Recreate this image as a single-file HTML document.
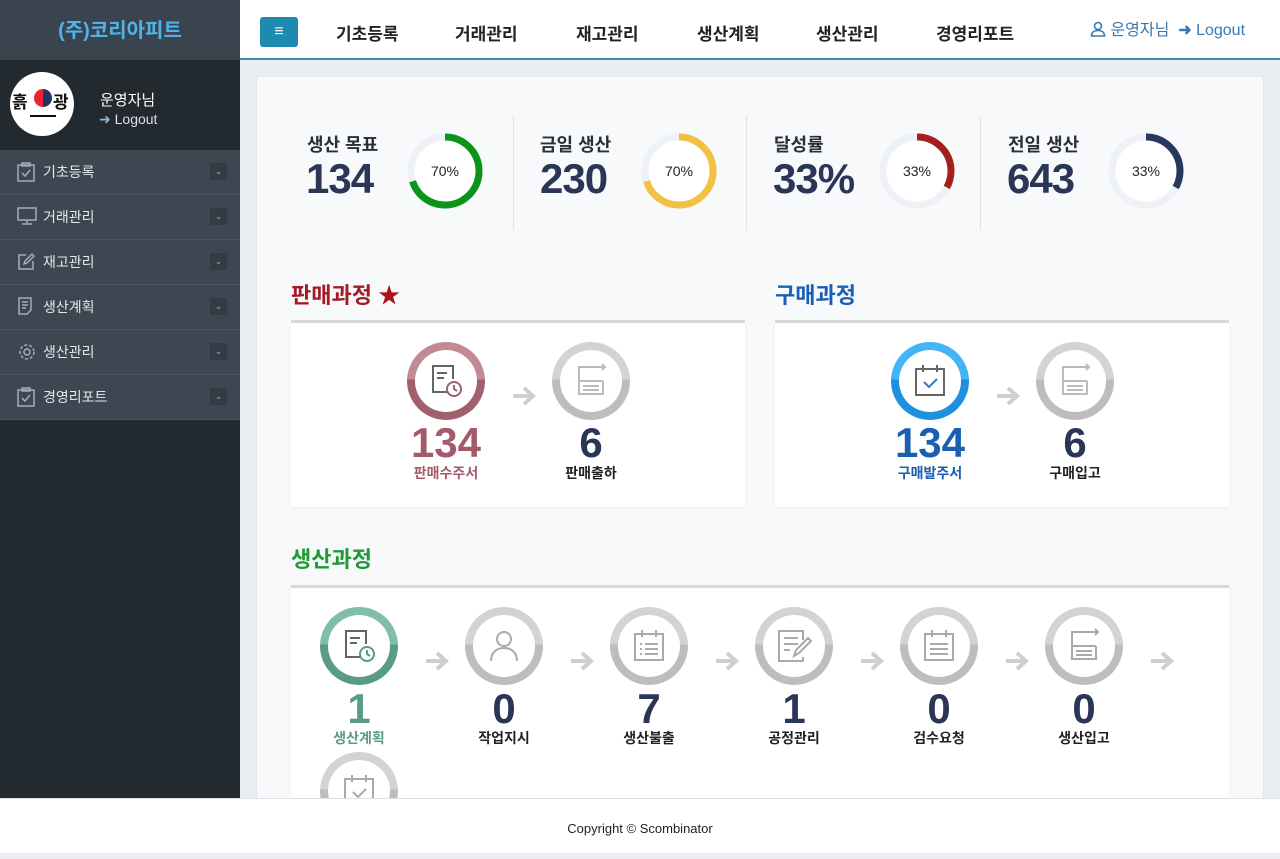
<!DOCTYPE html>
<html><head><meta charset="utf-8">
<style>
*{box-sizing:border-box;margin:0;padding:0}
body{width:1280px;height:853px;overflow:hidden;position:relative;background:#eaedf1;font-family:"Liberation Sans","Noto Sans CJK KR",sans-serif;color:#222}
.abs{position:absolute}
#side{left:0;top:0;width:240px;height:798px;background:#22292f}
#logo{left:0;top:0;width:240px;height:60px;background:#3a444e;color:#4fb3e8;font-size:20px;font-weight:bold;text-align:center;line-height:62px}
#menu{left:0;top:150px;width:240px}
.mi{height:45px;background:#3d4751;border-bottom:1px solid #4b555f;position:relative;color:#e4e7ea;font-size:14px;line-height:44px;padding-left:43px}
.mi svg{position:absolute;left:17px;top:12px}
.mi .ch{position:absolute;left:210px;top:13px;width:17px;height:17px;background:#333c45;color:#aab;font-size:9px;line-height:17px;text-align:center}
#top{left:240px;top:0;width:1040px;height:60px;background:#fff;border-bottom:2px solid #3a90ab}
.nav{top:20px;font-size:17px;font-weight:bold;color:#222}
#panel{left:256px;top:76px;width:1008px;height:760px;background:#f7f9fb;border:1px solid #e3e6ea}
.kl{font-size:18px;font-weight:bold;color:#2a2f3a;top:131px}
.kn{font-size:42px;font-weight:bold;color:#2a3656;top:155px;letter-spacing:-1px}
.dv{top:116px;width:1px;height:114px;background:#dfe2e6}
.card{background:#fff;border-top:3px solid #d5d8de;box-shadow:0 1px 2px rgba(0,0,0,.05)}
.tt{font-size:22px;font-weight:bold}
.ring{width:78px;height:78px;border-radius:50%}
.ring .in{position:absolute;left:8px;top:8px;width:62px;height:62px;border-radius:50%;background:#fff}
.ring svg{position:absolute;left:19px;top:19px}
.num{width:120px;text-align:center;font-size:42px;font-weight:bold;color:#2a3656;line-height:42px}
.lb{width:120px;text-align:center;font-size:14px;font-weight:bold;color:#222}
.arr{width:26px;height:22px}
#foot{left:0;top:798px;width:1280px;height:55px;background:#fff;border-top:1px solid #dde0e3;text-align:center;font-size:13px;line-height:60px;color:#222}
</style></head><body>
<svg width="0" height="0" style="position:absolute"><defs><symbol id="ar" viewBox="0 0 26 22"><path d="M2 11h20M13 3l9 8-9 8" fill="none" stroke="#cfcfcf" stroke-width="4"/></symbol></defs></svg>
<div id="side" class="abs"></div>
<div id="logo" class="abs">(주)코리아피트</div>
<div class="abs" style="left:10px;top:72px;width:64px;height:64px;border-radius:50%;background:#fff"></div>
<div class="abs" style="left:12px;top:88px;font-size:17px;font-weight:bold;color:#111">흙</div>
<div class="abs" style="left:53px;top:88px;font-size:17px;font-weight:bold;color:#111">광</div>
<div class="abs" style="left:34px;top:89px;width:18px;height:18px;border-radius:50%;background:linear-gradient(90deg,#e23 50%,#236 50%)"></div>
<div class="abs" style="left:30px;top:115px;width:26px;height:2px;background:#111"></div>
<div class="abs" style="left:100px;top:89px;color:#fff;font-size:15px">운영자님</div>
<div class="abs" style="left:99px;top:111px;color:#dde;font-size:14px"><span style="color:#8fb8d8">&#10140;</span> Logout</div>
<div id="menu" class="abs">
<div class="mi"><svg width="18" height="20" viewBox="0 0 18 20" fill="none" stroke="#aab" stroke-width="1.5"><rect x="1" y="3" width="16" height="16"/><rect x="5" y="1" width="8" height="3"/><path d="M5 11l3 3 5-6"/></svg>기초등록<span class="ch">&#8964;</span></div>
<div class="mi"><svg width="20" height="18" viewBox="0 0 20 18" fill="none" stroke="#aab" stroke-width="1.5"><rect x="1" y="1" width="18" height="12"/><path d="M10 13v3M5 17h10"/></svg>거래관리<span class="ch">&#8964;</span></div>
<div class="mi"><svg width="18" height="18" viewBox="0 0 18 18" fill="none" stroke="#aab" stroke-width="1.5"><path d="M9 3H2v14h14V9"/><path d="M7 12l1-3 7-7 2 2-7 7z"/></svg>재고관리<span class="ch">&#8964;</span></div>
<div class="mi"><svg width="16" height="18" viewBox="0 0 16 18" fill="none" stroke="#aab" stroke-width="1.5"><path d="M2 1h12v12l-4 4H2z"/><path d="M5 5h6M5 8h6M5 11h4"/></svg>생산계획<span class="ch">&#8964;</span></div>
<div class="mi"><svg width="20" height="20" viewBox="0 0 20 20" fill="none" stroke="#aab" stroke-width="1.5"><circle cx="10" cy="10" r="3"/><circle cx="10" cy="10" r="7" stroke-dasharray="3 2"/></svg>생산관리<span class="ch">&#8964;</span></div>
<div class="mi"><svg width="18" height="20" viewBox="0 0 18 20" fill="none" stroke="#aab" stroke-width="1.5"><rect x="1" y="3" width="16" height="16"/><rect x="5" y="1" width="8" height="3"/><path d="M5 11l3 3 5-6"/></svg>경영리포트<span class="ch">&#8964;</span></div>
</div>

<div id="top" class="abs"></div>
<div class="abs" style="left:260px;top:17px;width:38px;height:30px;background:#1f8ab0;border-radius:3px;color:#fff;text-align:center;line-height:30px;font-size:16px">&#8801;</div>
<div class="abs nav" style="left:336px">기초등록</div>
<div class="abs nav" style="left:455px">거래관리</div>
<div class="abs nav" style="left:576px">재고관리</div>
<div class="abs nav" style="left:697px">생산계획</div>
<div class="abs nav" style="left:816px">생산관리</div>
<div class="abs nav" style="left:936px">경영리포트</div>
<div class="abs" style="left:1090px;top:16px;color:#3a78b0;font-size:16px"><svg width="16" height="16" viewBox="0 0 16 16" fill="none" stroke="#3a78b0" stroke-width="1.6" style="vertical-align:-2px"><circle cx="8" cy="5" r="3.5"/><path d="M1.5 15c0-4 3-5.5 6.5-5.5s6.5 1.5 6.5 5.5z"/></svg> 운영자님 &nbsp;<b>&#10140;</b> Logout</div>

<div id="panel" class="abs"></div>
<div class="abs kl" style="left:307px">생산 목표</div><div class="abs kn" style="left:306px">134</div>
<div class="abs kl" style="left:540px">금일 생산</div><div class="abs kn" style="left:540px">230</div>
<div class="abs kl" style="left:774px">달성률</div><div class="abs kn" style="left:773px">33%</div>
<div class="abs kl" style="left:1008px">전일 생산</div><div class="abs kn" style="left:1007px">643</div>
<div class="abs dv" style="left:513px"></div><div class="abs dv" style="left:746px"></div><div class="abs dv" style="left:980px"></div>
<svg class="abs" style="left:407px;top:133px" width="76" height="76" viewBox="0 0 76 76"><circle cx="38" cy="38" r="34" fill="#fff" stroke="#eef1f5" stroke-width="7"/><circle cx="38" cy="38" r="34" fill="none" stroke="#0a9418" stroke-width="7" stroke-dasharray="149.5 214" transform="rotate(-90 38 38)"/><text x="38" y="43" text-anchor="middle" font-size="14" fill="#222" font-family="Liberation Sans">70%</text></svg>
<svg class="abs" style="left:641px;top:133px" width="76" height="76" viewBox="0 0 76 76"><circle cx="38" cy="38" r="34" fill="#fff" stroke="#eef1f5" stroke-width="7"/><circle cx="38" cy="38" r="34" fill="none" stroke="#f2c043" stroke-width="7" stroke-dasharray="149.5 214" transform="rotate(-90 38 38)"/><text x="38" y="43" text-anchor="middle" font-size="14" fill="#222" font-family="Liberation Sans">70%</text></svg>
<svg class="abs" style="left:879px;top:133px" width="76" height="76" viewBox="0 0 76 76"><circle cx="38" cy="38" r="34" fill="#fff" stroke="#eef1f5" stroke-width="7"/><circle cx="38" cy="38" r="34" fill="none" stroke="#a3201c" stroke-width="7" stroke-dasharray="70.5 214" transform="rotate(-90 38 38)"/><text x="38" y="43" text-anchor="middle" font-size="14" fill="#222" font-family="Liberation Sans">33%</text></svg>
<svg class="abs" style="left:1108px;top:133px" width="76" height="76" viewBox="0 0 76 76"><circle cx="38" cy="38" r="34" fill="#fff" stroke="#eef1f5" stroke-width="7"/><circle cx="38" cy="38" r="34" fill="none" stroke="#27385c" stroke-width="7" stroke-dasharray="70.5 214" transform="rotate(-90 38 38)"/><text x="38" y="43" text-anchor="middle" font-size="14" fill="#222" font-family="Liberation Sans">33%</text></svg>

<div class="abs tt" style="left:291px;top:278px;color:#a31c25">판매과정 <span style="color:#b0121c">&#9733;</span></div>
<div class="abs tt" style="left:775px;top:278px;color:#1a5fb4">구매과정</div>
<div class="abs tt" style="left:291px;top:542px;color:#1f9a36">생산과정</div>
<div class="abs card" style="left:291px;top:320px;width:454px;height:187px"></div>
<div class="abs card" style="left:775px;top:320px;width:454px;height:187px"></div>
<div class="abs card" style="left:291px;top:585px;width:938px;height:220px"></div>

<div class="abs ring" style="left:407px;top:342px;background:linear-gradient(#c18a95 48%,#a0606d 48%)"><div class="in"></div><svg width="40" height="40" viewBox="0 0 40 40" fill="none" stroke="#666" stroke-width="2"><path d="M21 31H7V5h20v13"/><path d="M11 12h10M11 17h7"/><circle cx="28" cy="28" r="7" stroke="#a0606d"/><path d="M28 24v4l3 2" stroke="#a0606d"/></svg></div>
<div class="abs num" style="left:386px;top:422px;color:#a35b6b">134</div>
<div class="abs lb" style="left:386px;top:463px;color:#a35b6b">판매수주서</div>
<svg class="abs arr" style="left:511px;top:385px"><use href="#ar"/></svg>
<div class="abs ring" style="left:552px;top:342px;background:linear-gradient(#d3d3d5 48%,#bdbdbf 48%)"><div class="in"></div><svg width="40" height="40" viewBox="0 0 40 40" fill="none" stroke="#bbb" stroke-width="2"><path d="M8 14V6h14M8 14v19h24V20M8 20h24M12 25h16M12 29h16"/><path d="M22 6h12M31 3l3 3-3 3"/></svg></div>
<div class="abs num" style="left:531px;top:422px">6</div>
<div class="abs lb" style="left:531px;top:463px">판매출하</div>

<div class="abs ring" style="left:891px;top:342px;background:linear-gradient(#43b4f4 48%,#1e90e0 48%)"><div class="in"></div><svg width="40" height="40" viewBox="0 0 40 40" fill="none" stroke="#666" stroke-width="2"><rect x="6" y="8" width="28" height="26"/><path d="M13 4v7M27 4v7"/><path d="M14 21l5 5 8-8" stroke="#2a7ad0"/></svg></div>
<div class="abs num" style="left:870px;top:422px;color:#1a5fb0">134</div>
<div class="abs lb" style="left:870px;top:463px;color:#1a5fb0">구매발주서</div>
<svg class="abs arr" style="left:995px;top:385px"><use href="#ar"/></svg>
<div class="abs ring" style="left:1036px;top:342px;background:linear-gradient(#d3d3d5 48%,#bdbdbf 48%)"><div class="in"></div><svg width="40" height="40" viewBox="0 0 40 40" fill="none" stroke="#bbb" stroke-width="2"><path d="M8 14V6h14M8 14v19h24V20M8 20h24M12 25h16M12 29h16"/><path d="M22 6h12M31 3l3 3-3 3"/></svg></div>
<div class="abs num" style="left:1015px;top:422px">6</div>
<div class="abs lb" style="left:1015px;top:463px">구매입고</div>

<div class="abs ring" style="left:320px;top:607px;background:linear-gradient(#7fbfa5 48%,#5a9c82 48%)"><div class="in"></div><svg width="40" height="40" viewBox="0 0 40 40" fill="none" stroke="#666" stroke-width="2"><path d="M21 31H7V5h20v13"/><path d="M11 12h10M11 17h7"/><circle cx="28" cy="28" r="7" stroke="#5a9c82"/><path d="M28 24v4l3 2" stroke="#5a9c82"/></svg></div>
<div class="abs num" style="left:299px;top:688px;color:#5a9c80">1</div>
<div class="abs lb" style="left:299px;top:728px;color:#5a9c80">생산계획</div>
<svg class="abs arr" style="left:424px;top:650px"><use href="#ar"/></svg>

<div class="abs ring" style="left:465px;top:607px;background:linear-gradient(#d3d3d5 48%,#bdbdbf 48%)"><div class="in"></div><svg width="40" height="40" viewBox="0 0 40 40" fill="none" stroke="#aaa" stroke-width="2"><circle cx="20" cy="13" r="7"/><path d="M7 35c0-9 6-13 13-13s13 4 13 13"/></svg></div>
<div class="abs num" style="left:444px;top:688px">0</div>
<div class="abs lb" style="left:444px;top:728px">작업지시</div>
<svg class="abs arr" style="left:569px;top:650px"><use href="#ar"/></svg>

<div class="abs ring" style="left:610px;top:607px;background:linear-gradient(#d3d3d5 48%,#bdbdbf 48%)"><div class="in"></div><svg width="40" height="40" viewBox="0 0 40 40" fill="none" stroke="#aaa" stroke-width="2"><rect x="6" y="8" width="28" height="26"/><path d="M13 4v7M27 4v7M11 18h2M16 18h13M11 23h2M16 23h13M11 28h2M16 28h13"/></svg></div>
<div class="abs num" style="left:589px;top:688px">7</div>
<div class="abs lb" style="left:589px;top:728px">생산불출</div>
<svg class="abs arr" style="left:714px;top:650px"><use href="#ar"/></svg>

<div class="abs ring" style="left:755px;top:607px;background:linear-gradient(#d3d3d5 48%,#bdbdbf 48%)"><div class="in"></div><svg width="40" height="40" viewBox="0 0 40 40" fill="none" stroke="#aaa" stroke-width="2"><path d="M29 14V5H5v30h24v-4"/><path d="M10 12h14M10 18h14M10 24h6"/><path d="M20 30l2-6 12-12 3 3-12 12z"/></svg></div>
<div class="abs num" style="left:734px;top:688px">1</div>
<div class="abs lb" style="left:734px;top:728px">공정관리</div>
<svg class="abs arr" style="left:859px;top:650px"><use href="#ar"/></svg>

<div class="abs ring" style="left:900px;top:607px;background:linear-gradient(#d3d3d5 48%,#bdbdbf 48%)"><div class="in"></div><svg width="40" height="40" viewBox="0 0 40 40" fill="none" stroke="#aaa" stroke-width="2"><rect x="6" y="8" width="28" height="26"/><path d="M13 4v7M27 4v7M11 18h18M11 23h18M11 28h18"/></svg></div>
<div class="abs num" style="left:879px;top:688px">0</div>
<div class="abs lb" style="left:879px;top:728px">검수요청</div>
<svg class="abs arr" style="left:1004px;top:650px"><use href="#ar"/></svg>

<div class="abs ring" style="left:1045px;top:607px;background:linear-gradient(#d3d3d5 48%,#bdbdbf 48%)"><div class="in"></div><svg width="40" height="40" viewBox="0 0 40 40" fill="none" stroke="#aaa" stroke-width="2"><path d="M8 14V6h14M8 14v19h24V20M8 20h24M12 25h16M12 29h16"/><path d="M22 6h12M31 3l3 3-3 3"/></svg></div>
<div class="abs num" style="left:1024px;top:688px">0</div>
<div class="abs lb" style="left:1024px;top:728px">생산입고</div>
<svg class="abs arr" style="left:1149px;top:650px"><use href="#ar"/></svg>

<div class="abs ring" style="left:320px;top:752px;background:linear-gradient(#d3d3d5 48%,#bdbdbf 48%)"><div class="in"></div><svg width="40" height="40" viewBox="0 0 40 40" fill="none" stroke="#aaa" stroke-width="2"><rect x="6" y="8" width="28" height="26"/><path d="M13 4v7M27 4v7M14 21l5 5 8-8"/></svg></div>

<div id="foot" class="abs">Copyright © Scombinator</div>
</body></html>
